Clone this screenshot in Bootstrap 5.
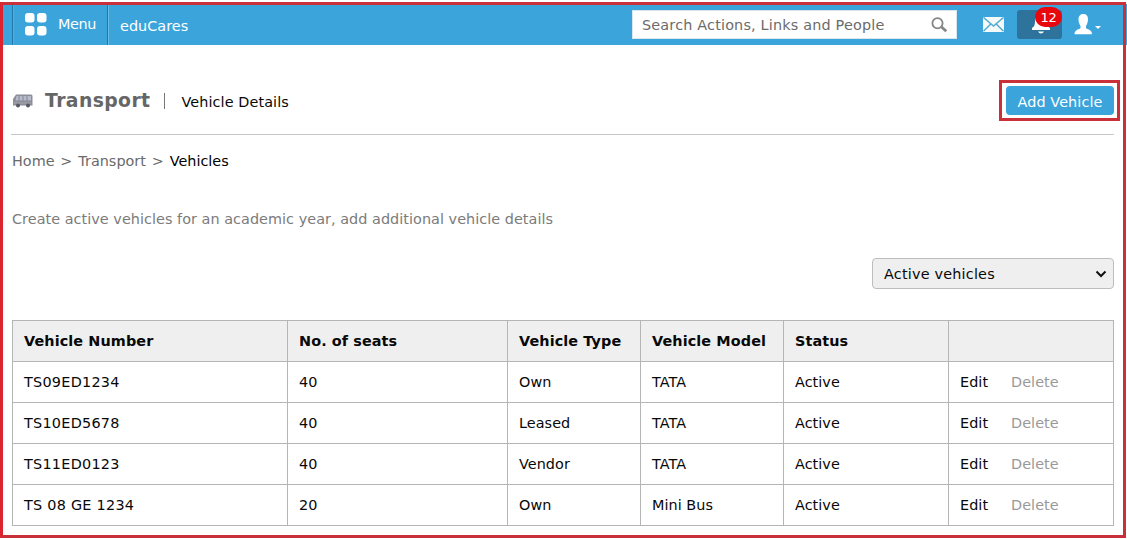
<!DOCTYPE html>
<html lang="en">
<head>
<meta charset="utf-8">
<meta name="viewport" content="width=device-width, initial-scale=1">
<title>eduCares - Vehicle Details</title>
<link href="https://cdn.jsdelivr.net/npm/bootstrap@5.3.0/dist/css/bootstrap.min.css" rel="stylesheet">
<style>
  body { font-family: Verdana, "DejaVu Sans", sans-serif; font-size: 14.4px; line-height: 20px; color: #080808; height: 539px; overflow: hidden; letter-spacing: .045px; }
  .page-frame { position: absolute; inset: 2px 1px 1px 0; border: 3px solid #c9303a; border-left-color: #dc2430; pointer-events: none; z-index: 5; }
  .topbar { height: 41px; margin: 4px 0 0 3px; background: #3aa4db; color: #fff; }
  .menu-link { margin-left: 9px; width: 96px; padding-left: 12px; border-left: 1px solid #2278ab; border-right: 1px solid #2278ab; box-shadow: 1px 0 #68bbe5, inset 1px 0 #52aede; }
  .menu-text { margin: -2px 0 0 11px; letter-spacing: -.4px; }
  .brand-text { margin: 2px 0 0 12px; }
  .search-box { width: 325px; height: 29px; padding: 0 8px 0 9px; background: #fff; color: #6b6b6b; margin-right: 26px; border: 1px solid #d9e6ed; letter-spacing: .18px; }
  .bell-tile { width: 45px; height: 29px; background: #2d739c; border-radius: 3px; margin-left: 13px; }
  .count-pill { position: absolute; left: 18px; top: -3px; width: 27px; height: 20px; border-radius: 10px; background: #e8070d; font-size: 13px; line-height: 21px; letter-spacing: -.3px; text-align: center; }
  .user-icon { margin: 0 24px 0 12px; }
  .page-body { padding: 0 13px 0 12px; }
  .title-row { height: 90px; margin-left: -1px; padding-top: 22px; border-bottom: 1px solid #c7c7c7; }
  .bus { margin: 0 12px 0 2px; }
  .section-name { font-size: 18.8px; font-weight: 700; color: #666; letter-spacing: .4px; }
  .title-divider { width: 1px; height: 16px; background: #777; margin: 0 16px 0 14px; }
  .sub-text { margin-top: 2px; letter-spacing: .1px; }
  .add-wrap { padding: 3px 3px 3px 4px; border: 3px solid #c9303a; margin-right: -6px; }
  .btn-add { width: 108px; height: 29px; background: #3aa4db; color: #fff; border-radius: 4px; padding: 2px 0 0; border: 0; font-size: inherit; line-height: 20px; letter-spacing: .1px; }
  .crumbs { margin-top: 16px; color: #6a6a6a; word-spacing: 1.2px; letter-spacing: .02px; }
  .intro { margin-top: 38px; color: #7b7b7b; }
  .filter-box { width: 242px; height: 31px; margin: 29px 0 31px auto; padding: 0 6px 0 11px; background: #efefef; border: 1px solid #bdbdbd; border-radius: 4px; letter-spacing: .2px; }
  .grid-table { width: 1102px; table-layout: fixed; border-collapse: collapse; }
  .grid-table td, .grid-table th { height: 41px; padding: 0 11px; border: 1px solid #b5b5b5; white-space: nowrap; vertical-align: middle; }
  .grid-table th { background: #efefef; font-weight: 700; letter-spacing: .1px; padding-bottom: 1px; }
  .grid-table td { letter-spacing: .05px; }
  .grid-table td:first-child { letter-spacing: .26px; }
  .off { color: #999; margin-left: 23px; }
</style>
</head>
<body class="position-relative">
<div class="page-frame"></div>
<nav class="topbar d-flex align-items-center">
  <a class="menu-link h-100 d-flex align-items-center text-white text-decoration-none">
    <svg width="22" height="23" viewBox="0 0 22 23" fill="#fff"><rect width="9.500" height="9.500" rx="3"/><rect x="12" width="9.500" height="9.500" rx="3"/><rect y="13" width="9.500" height="9.500" rx="3"/><rect x="12" y="13" width="9.500" height="9.500" rx="3"/></svg>
    <span class="menu-text">Menu</span>
  </a>
  <span class="brand-text">eduCares</span>
  <div class="search-box ms-auto d-flex align-items-center justify-content-between">
    <span>Search Actions, Links and People</span>
    <svg width="17" height="16" viewBox="0 0 17 16" fill="none" stroke="#858585"><circle cx="6.500" cy="6.300" r="5.100" stroke-width="1.800"/><path d="M10.500 10l4.800 4.300" stroke-width="2.800"/></svg>
  </div>
  <svg width="21" height="15" viewBox="0 0 21 15"><path fill="#f4faf9" d="M0 0h21v15H0z"/><path d="M.5.500 10.500 9l10-8.500M.5 14.300l7-7m13 7-7-7" fill="none" stroke="#57aad0" stroke-width="1.500"/></svg>
  <div class="bell-tile position-relative">
    <svg class="d-block" width="45" height="29" viewBox="0 0 45 29"><path d="M24 4c-4 0-6 3-6 7 0 4-1 6-3 7v2h18v-2c-2-1-3-3-3-7 0-4-2-7-6-7z" fill="#fff"/><path d="M21 21.500h6q-1 2-3 2t-3-2z" fill="#fff"/></svg>
    <span class="count-pill">12</span>
  </div>
  <svg class="user-icon" width="29" height="22" viewBox="0 0 29 22" fill="#fff"><path d="M9.500 0c3 0 4.500 2 4.500 5s-1 5.500-2 7v2.200c2.500 1.200 6 2 6 6H.5c0-4 3.500-4.800 6-6V12c-1-1.500-2-4-2-7s2-5 5-5z"/><path d="M21 12h6l-3 3z"/></svg>
</nav>
<main class="page-body">
  <div class="title-row d-flex align-items-center">
    <svg class="bus" width="20" height="14" viewBox="0 0 20 14"><path d="M3 .5h15q1.500 0 1.500 1.500v9.500H0V5z" fill="#8b8d98"/><path d="M3.500 2H18v4.500H2.500z" fill="#b8bbc9"/><path d="M6 2v5m4-5v5m4-5v5" stroke="#85879a"/><path d="M1 9h17" stroke="#aaa"/><circle cx="5" cy="11.500" r="2" fill="#555762"/><circle cx="15" cy="11.500" r="2" fill="#555762"/></svg>
    <span class="section-name">Transport</span>
    <span class="title-divider"></span>
    <span class="sub-text">Vehicle Details</span>
    <div class="add-wrap ms-auto"><button class="btn btn-add d-block">Add Vehicle</button></div>
  </div>
  <div class="crumbs"><span>Home</span> &gt; <span>Transport</span> &gt; <span class="text-black">Vehicles</span></div>
  <div class="intro">Create active vehicles for an academic year, add additional vehicle details</div>
  <div class="filter-box d-flex align-items-center justify-content-between"><span>Active vehicles</span>
    <svg width="12" height="8" viewBox="0 0 12 8" fill="none" stroke="#111" stroke-width="2"><path d="m1.500 1.500 4.500 4.500 4.500-4.500"/></svg></div>
  <table class="grid-table">
    <colgroup><col style="width:275px"><col style="width:220px"><col style="width:133px"><col style="width:143px"><col style="width:165px"><col style="width:165px"></colgroup>
    <thead><tr><th>Vehicle Number</th><th>No. of seats</th><th>Vehicle Type</th><th>Vehicle Model</th><th>Status</th><th></th></tr></thead>
    <tbody>
      <tr><td>TS09ED1234</td><td>40</td><td>Own</td><td>TATA</td><td>Active</td><td>Edit<span class="off">Delete</span></td></tr>
      <tr><td>TS10ED5678</td><td>40</td><td>Leased</td><td>TATA</td><td>Active</td><td>Edit<span class="off">Delete</span></td></tr>
      <tr><td>TS11ED0123</td><td>40</td><td>Vendor</td><td>TATA</td><td>Active</td><td>Edit<span class="off">Delete</span></td></tr>
      <tr><td>TS 08 GE 1234</td><td>20</td><td>Own</td><td>Mini Bus</td><td>Active</td><td>Edit<span class="off">Delete</span></td></tr>
    </tbody>
  </table>
</main>
<script src="https://cdn.jsdelivr.net/npm/bootstrap@5.3.0/dist/js/bootstrap.bundle.min.js"></script>
</body>
</html>
